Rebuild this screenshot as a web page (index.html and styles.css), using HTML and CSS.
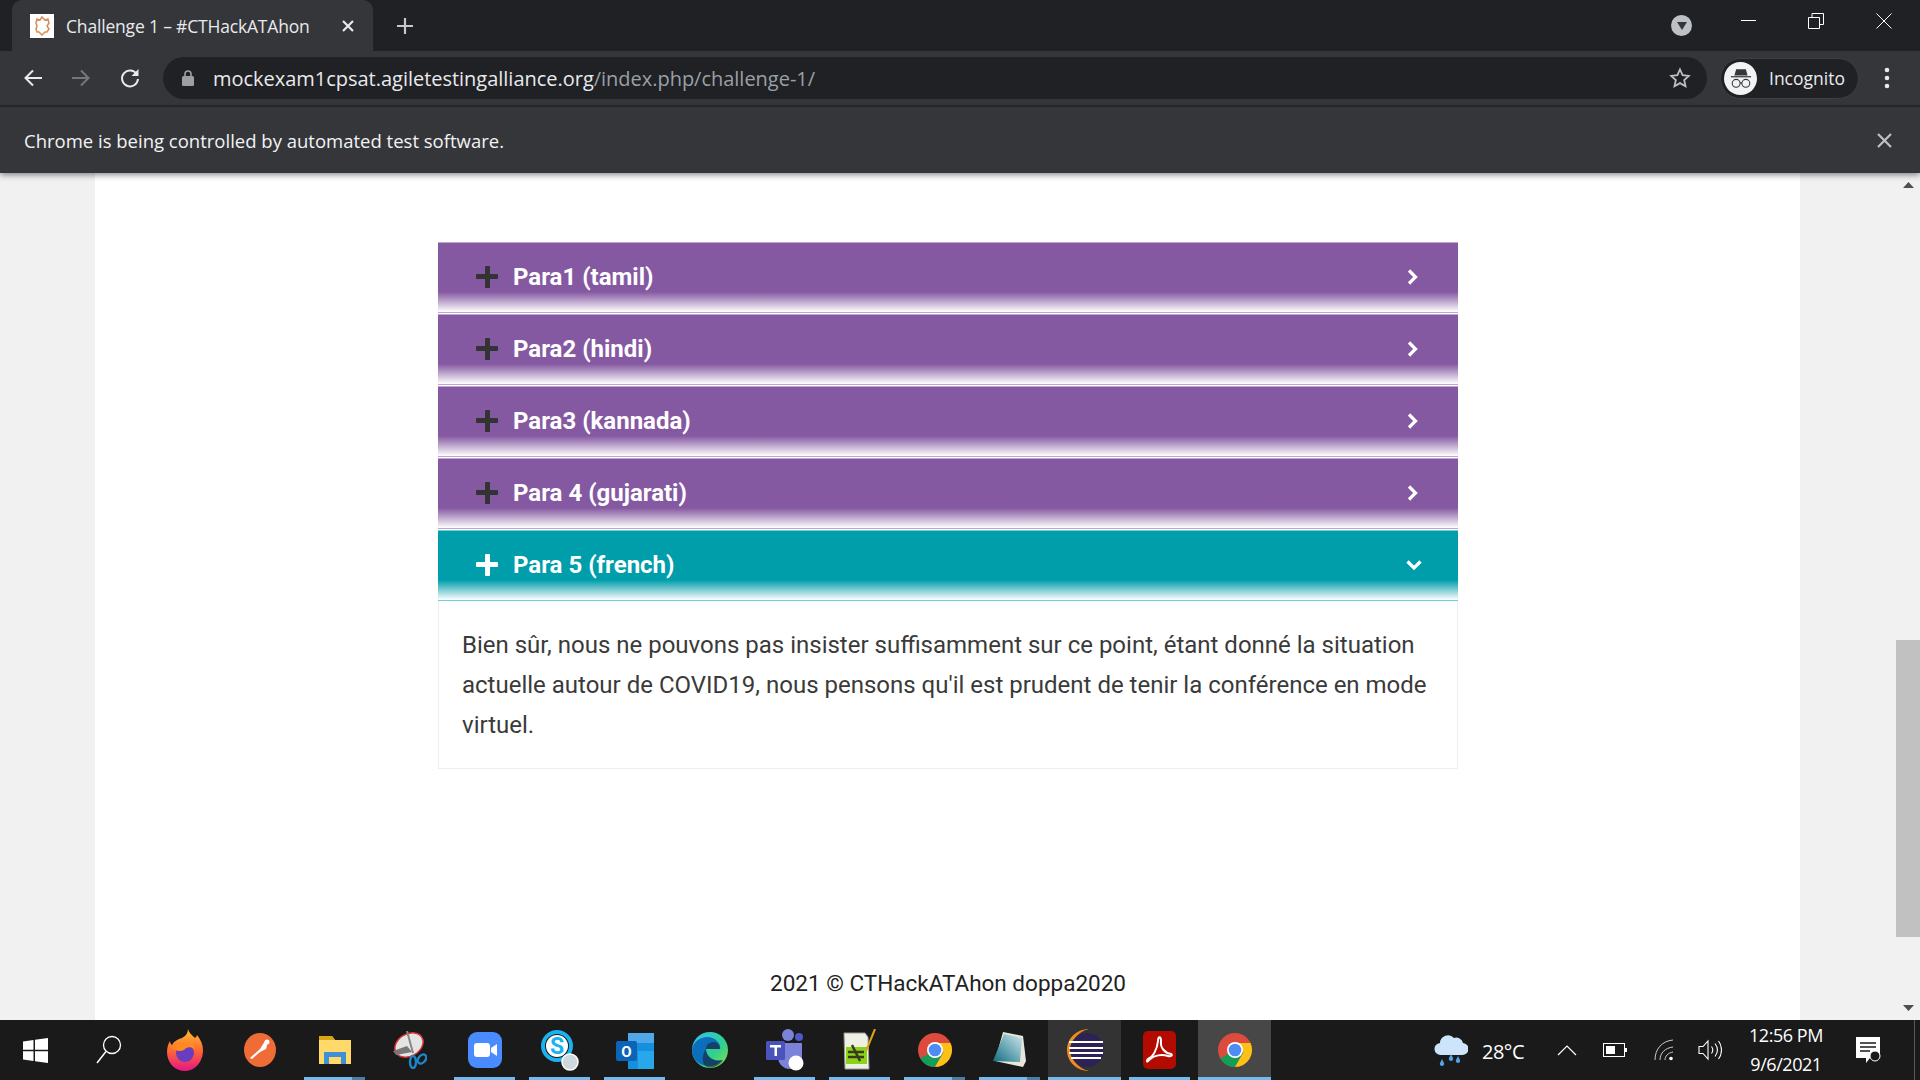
FILE: index.html
```html
<!DOCTYPE html>
<html lang="en">
<head>
<meta charset="utf-8">
<title>Challenge 1 – #CTHackATAhon</title>
<link rel="stylesheet" href="styles.css">
</head>
<body>
<div class="browser">
  <header class="tabstrip">
    <div class="tab">
      <span class="favicon"><svg width="18" height="20" viewBox="0 0 18 20"><path d="M9 1l3 3 3-1 1 4-2 3 2 3-2 3-2 0-3 3-3-3-2 0-1-3 1-3-1-3 1-4 3 1z" fill="none" stroke="#d9905f" stroke-width="1.6"/></svg></span>
      <span class="tab-title">Challenge 1 – #CTHackATAhon</span>
      <svg class="tab-close" width="14" height="14" viewBox="0 0 14 14"><path d="M2 2l10 10M12 2L2 12" stroke="#e8eaed" stroke-width="2.2"/></svg>
    </div>
    <svg class="new-tab" width="18" height="18" viewBox="0 0 18 18"><path d="M9 1v16M1 9h16" stroke="#c4c7cb" stroke-width="2.2"/></svg>
    <div class="win-group">
      <span class="tab-search"><svg width="10" height="8" viewBox="0 0 10 8"><path d="M0 0h10L5 8z" fill="#35363a"/></svg></span>
      <span class="win-btn"><svg width="15" height="15" viewBox="0 0 15 15"><path d="M0 7.5h15" stroke="#fff" stroke-width="1"/></svg></span>
      <span class="win-btn"><svg width="16" height="16" viewBox="0 0 16 16"><path d="M.5 4.5h11v11H.5zM4 4.5V.5h11.500v11h-4" fill="none" stroke="#fff" stroke-width="1"/></svg></span>
      <span class="win-btn"><svg width="16" height="16" viewBox="0 0 16 16"><path d="M.5.500l15 15M15.500.500l-15 15" stroke="#fff" stroke-width="1"/></svg></span>
    </div>
  </header>

  <nav class="toolbar">
    <svg class="nav-icon" width="20" height="20" viewBox="0 0 20 20"><path d="M19 10H3M10 2.500L2.500 10l7.500 7.500" fill="none" stroke="#e8eaed" stroke-width="2"/></svg>
    <svg class="nav-icon" width="20" height="20" viewBox="0 0 20 20"><path d="M1 10h16M10 2.500l7.500 7.500-7.500 7.500" fill="none" stroke="#75777a" stroke-width="2"/></svg>
    <svg class="nav-icon" width="22" height="22" viewBox="0 0 22 22"><path d="M18 7.500A8 8 0 1 0 19 12" fill="none" stroke="#e8eaed" stroke-width="2"/><path d="M19.500 2v7h-7z" fill="#e8eaed"/></svg>
    <div class="omnibox">
      <svg class="lock" width="12" height="16" viewBox="0 0 12 16"><path d="M3 6V4a3 3 0 0 1 6 0v2" fill="none" stroke="#9aa0a6" stroke-width="1.600"/><rect y="6" width="12" height="10" rx="1.500" fill="#9aa0a6"/></svg>
      <span class="url"><span class="url-host">mockexam1cpsat.agiletestingalliance.org</span><span class="url-path">/index.php/challenge-1/</span></span>
      <svg class="star" width="22" height="22" viewBox="0 0 22 22"><path d="M11 2.500l2.600 5.700 6.200.7-4.600 4.200 1.300 6.100L11 16.100l-5.500 3.100 1.300-6.100-4.600-4.200 6.200-.7z" fill="none" stroke="#bdc1c6" stroke-width="1.800"/></svg>
    </div>
    <div class="profile">
      <span class="profile-avatar"><svg width="22" height="21" viewBox="0 0 25 23"><path d="M7 1h11l2 7H5z" fill="#35363a"/><path d="M1 9.500h23" stroke="#35363a" stroke-width="1.400"/><circle cx="7" cy="17" r="4.500" fill="none" stroke="#35363a" stroke-width="1.200"/><circle cx="18" cy="17" r="4.500" fill="none" stroke="#35363a" stroke-width="1.200"/><path d="M11.500 16.500h2" stroke="#35363a" stroke-width="1.200"/></svg></span>
      <span class="profile-name">Incognito</span>
    </div>
    <svg class="menu-dots" width="6" height="22" viewBox="0 0 6 22"><circle cx="3" cy="3" r="2.300" fill="#e8eaed"/><circle cx="3" cy="11" r="2.300" fill="#e8eaed"/><circle cx="3" cy="19" r="2.300" fill="#e8eaed"/></svg>
  </nav>

  <div class="infobar">
    <span class="infobar-text">Chrome is being controlled by automated test software.</span>
    <svg width="15" height="15" viewBox="0 0 15 15"><path d="M1 1l13 13M14 1L1 14" stroke="#bdc1c6" stroke-width="2.200"/></svg>
  </div>

  <main class="viewport">
    <div class="page">
      <div class="content">
        <section class="accordion">
          <div class="acc-item">
            <div class="acc-head"><span class="acc-plus"></span><h3 class="acc-title">Para1 (tamil)</h3><svg class="acc-chevron" width="14" height="18" viewBox="0 0 14 18"><path d="M3 2.500l6.500 6.500L3 15.500" fill="none" stroke="#fff" stroke-width="3.200"/></svg></div>
          </div>
          <div class="acc-item">
            <div class="acc-head"><span class="acc-plus"></span><h3 class="acc-title">Para2 (hindi)</h3><svg class="acc-chevron" width="14" height="18" viewBox="0 0 14 18"><path d="M3 2.500l6.500 6.500L3 15.500" fill="none" stroke="#fff" stroke-width="3.200"/></svg></div>
          </div>
          <div class="acc-item">
            <div class="acc-head"><span class="acc-plus"></span><h3 class="acc-title">Para3 (kannada)</h3><svg class="acc-chevron" width="14" height="18" viewBox="0 0 14 18"><path d="M3 2.500l6.500 6.500L3 15.500" fill="none" stroke="#fff" stroke-width="3.200"/></svg></div>
          </div>
          <div class="acc-item">
            <div class="acc-head"><span class="acc-plus"></span><h3 class="acc-title">Para 4 (gujarati)</h3><svg class="acc-chevron" width="14" height="18" viewBox="0 0 14 18"><path d="M3 2.500l6.500 6.500L3 15.500" fill="none" stroke="#fff" stroke-width="3.200"/></svg></div>
          </div>
          <div class="acc-item is-open">
            <div class="acc-head"><span class="acc-plus"></span><h3 class="acc-title">Para 5 (french)</h3><svg class="acc-chevron" width="16" height="12" viewBox="0 0 16 12"><path d="M1.500 2.500L8 9l6.500-6.500" fill="none" stroke="#fff" stroke-width="3.200"/></svg></div>
            <div class="acc-body">Bien sûr, nous ne pouvons pas insister suffisamment sur ce point, étant donné la situation actuelle autour de COVID19, nous pensons qu'il est prudent de tenir la conférence en mode virtuel.</div>
          </div>
        </section>
        <footer class="page-footer">2021 © CTHackATAhon doppa2020</footer>
      </div>
    </div>
    <aside class="scrollbar">
      <svg width="11" height="6" viewBox="0 0 11 6"><path d="M0 6h11L5.500 0z" fill="#505050"/></svg>
      <div class="scroll-track"><div class="scroll-thumb"></div></div>
      <svg width="11" height="6" viewBox="0 0 11 6"><path d="M0 0h11L5.500 6z" fill="#505050"/></svg>
    </aside>
  </main>

  <footer class="taskbar">
    <div class="task-system task-start"><svg width="25" height="25" viewBox="0 0 25 25"><path d="M0 3.500l10.500-1.500v9.800H0zM12 1.800L25 0v11.800H12zM0 13.300h10.500V23L0 21.500zM12 13.300h13V25l-13-1.800z" fill="#fff"/></svg></div>
    <div class="task-system task-search"><svg width="26" height="30" viewBox="0 0 26 30"><circle cx="16" cy="10" r="8.500" fill="none" stroke="#fff" stroke-width="1.300"/><path d="M10 16.500L1 28" stroke="#fff" stroke-width="1.500"/></svg></div>

    <div class="task-btn"><svg width="36" height="42" viewBox="0 0 36 42"><defs><linearGradient id="ff" x1="0" y1="0" x2="0" y2="1"><stop offset="0" stop-color="#ffc22e"/><stop offset=".5" stop-color="#ff6a30"/><stop offset="1" stop-color="#e31587"/></linearGradient></defs><path d="M21 0c1 4 4 6 7 9 1-1 2-2 2-3 4 5 6 10 6 15 0 12-8 21-18 21S0 34 0 23c0-4 1-8 3-11 0 2 1 3 2 4 2-4 6-6 10-7 4-2 6-5 6-9z" fill="url(#ff)"/><circle cx="18" cy="24" r="9" fill="#6a3dc0"/><path d="M5 19c4-6 14-8 20-4 3 2 3 5 3 5-5-3-9-2-11 1-4 2-8 1-12-2z" fill="#ff8a1f"/></svg></div>
    <div class="task-btn"><svg width="32" height="34" viewBox="0 0 32 34"><ellipse cx="16" cy="17" rx="16" ry="17" fill="#ef6c37"/><path d="M6 25l10-9 5-8 3 1-2 7-6 3-8 7z" fill="#fff"/><circle cx="23" cy="9" r="2.500" fill="#fff"/></svg></div>
    <div class="task-btn has-line is-stacked"><svg width="32" height="32" viewBox="0 0 32 32"><path d="M0 2h13l3 4h16v24H0z" fill="#ffd969"/><path d="M0 2h13l3 4H0z" fill="#d9a514"/><path d="M5 30V18h22v12h-5v-7H10v7z" fill="#3f8fd6"/></svg></div>
    <div class="task-btn"><svg width="34" height="38" viewBox="0 0 34 38"><ellipse cx="16" cy="14" rx="15" ry="11" transform="rotate(-30 16 14)" fill="#e4e4e4" stroke="#d33" stroke-width="1.500"/><path d="M0 20l14-5 5 6-16 3z" fill="#777"/><path d="M14 0l6 22" stroke="#888" stroke-width="2"/><ellipse cx="20" cy="31" rx="3" ry="6" fill="none" stroke="#1d86c9" stroke-width="2.400"/><ellipse cx="29" cy="28" rx="3.500" ry="5" fill="none" stroke="#1d86c9" stroke-width="2.400" transform="rotate(40 29 28)"/></svg></div>
    <div class="task-btn has-line"><svg width="34" height="36" viewBox="0 0 34 36"><rect width="34" height="36" rx="9" fill="#4a8cff"/><rect x="6" y="11" width="16" height="14" rx="3" fill="#fff"/><path d="M23 16l6-4v12l-6-4z" fill="#fff"/></svg></div>
    <div class="task-btn has-line"><svg width="38" height="44" viewBox="0 0 38 44"><circle cx="16" cy="18" r="14" fill="none" stroke="#19b3f0" stroke-width="4"/><circle cx="16" cy="18" r="11" fill="#fff"/><text x="16" y="26" class="skype-s" text-anchor="middle">S</text><circle cx="29" cy="34" r="8" fill="#cfd8dc" stroke="#fff" stroke-width="1.500"/></svg></div>
    <div class="task-btn has-line"><svg width="38" height="38" viewBox="0 0 38 38"><path d="M12 2h26v36H12z" fill="#1490df"/><path d="M12 2h26v10H12z" fill="#50a8e8"/><path d="M22 20h16v18H22z" fill="#28a8ea"/><rect y="10" width="21" height="20" rx="2" fill="#0a64b8"/><text x="10.500" y="25.500" class="outlook-o" text-anchor="middle">O</text></svg></div>
    <div class="task-btn"><svg width="36" height="44" viewBox="0 0 36 44"><defs><linearGradient id="edge" x1="0" y1="0" x2="1" y2="1"><stop offset="0" stop-color="#35c1f1"/><stop offset=".6" stop-color="#2fd08e"/><stop offset="1" stop-color="#8ddc4f"/></linearGradient></defs><circle cx="18" cy="22" r="18" fill="url(#edge)"/><path d="M0 22C1 10 18 4 26 14c3 4 2 7 2 7H14c0 8 8 13 16 11-8 11-30 7-30-10z" fill="#0c6fbe"/><path d="M14 21c0-5 4-7 8-7s6 4 6 7zM14 21c0 8 8 14 17 11-4 6-10 9-16 7-6-3-5-13-1-18z" fill="#1b1b1b" opacity=".55"/></svg></div>
    <div class="task-btn has-line"><svg width="38" height="44" viewBox="0 0 38 44"><circle cx="22" cy="7" r="6" fill="#7b83d9"/><circle cx="33" cy="9" r="4" fill="#5059c9"/><path d="M12 15h24v14a9 9 0 0 1-24 0z" fill="#7b83d9"/><rect y="13" width="19" height="19" rx="1.500" fill="#4b53bc"/><path d="M4 17h11v2.500h-4V28H8.500v-8.500H4z" fill="#fff"/><circle cx="30" cy="35" r="7.500" fill="#fff"/></svg></div>
    <div class="task-btn has-line"><svg width="34" height="42" viewBox="0 0 34 42"><path d="M1 4h21l3 4 1 32H2z" fill="#eef0e4" stroke="#999" stroke-width="1"/><path d="M3 18h21v17H3z" fill="#8bd317"/><path d="M5 23h16M5 28h16M9 16l8 16" stroke="#3a3a1c" stroke-width="2.500"/><path d="M32 0l-9 22" stroke="#e0a113" stroke-width="2"/></svg></div>
    <div class="task-btn has-line is-stacked"><svg width="34" height="34" viewBox="0 0 34 34"><use href="#chrome-mark"/></svg></div>
    <div class="task-btn has-line is-stacked"><svg width="34" height="36" viewBox="0 0 34 36"><path d="M10 0l20 4 3 25-3 6-28-6z" fill="#e7e7d9"/><path d="M11 2l18 4-2 24L0 29z" fill="url(#np)"/><defs><linearGradient id="np" x1="0" y1="1" x2="1" y2="0"><stop offset="0" stop-color="#0f6d80"/><stop offset="1" stop-color="#cfe8ef"/></linearGradient></defs></svg></div>
    <div class="task-btn is-active"><svg width="36" height="42" viewBox="0 0 36 42"><path d="M22 0C10 0 0 9 0 21s10 21 22 21C12 40 4 31 4 21S12 2 22 0z" fill="#f28c1e"/><circle cx="20" cy="21" r="17" fill="#2c2255"/><path d="M2 13h34M2 19h34M2 24h34M4 29h30" stroke="#fff" stroke-width="2"/></svg></div>
    <div class="task-btn has-line"><svg width="33" height="38" viewBox="0 0 33 38"><rect width="33" height="38" rx="5" fill="#b30b00"/><path d="M5 28c5-2 9-9 10-18 0-5 3-5 3 0-1 7 4 12 10 13 2 1 0 3-3 2-6-2-14-1-19 4-2 3-3 1-1-1z" fill="none" stroke="#fff" stroke-width="2"/></svg></div>
    <div class="task-btn is-active is-bright"><svg width="34" height="34" viewBox="0 0 34 34"><defs><g id="chrome-mark"><circle cx="17" cy="17" r="17" fill="#dd4b3e"/><path d="M17 17L2.300 25.500A17 17 0 0 0 17 34l8.500-14.700z" fill="#129d58"/><path d="M17 10h15.500A17 17 0 0 1 17 34l8.500-14.700z" fill="#fbc116"/><circle cx="17" cy="17" r="8" fill="#fff"/><circle cx="17" cy="17" r="6.300" fill="#4d8cf5"/></g></defs><use href="#chrome-mark"/></svg></div>

    <div class="tray">
      <span class="tray-weather"><svg width="34" height="36" viewBox="0 0 34 36"><path d="M7 23a6 6 0 0 1-1-12 8 8 0 0 1 14-5 7 7 0 0 1 9 5 6 6 0 0 1-1 12z" fill="#cde4fa"/><path d="M8 27l2 4a2.200 2.200 0 1 1-4 0zM17 22l2 4a2.200 2.200 0 1 1-4 0zM24 24l2 4a2.200 2.200 0 1 1-4 0z" fill="#4fa3e8"/></svg></span>
      <span class="tray-temp">28°C</span>
      <svg class="tray-chevron" width="20" height="12" viewBox="0 0 20 12"><path d="M1 11l9-9 9 9" fill="none" stroke="#fff" stroke-width="1.200"/></svg>
      <svg class="tray-battery" width="24" height="14" viewBox="0 0 24 14"><rect x=".5" y=".5" width="21" height="13" fill="none" stroke="#fff"/><rect x="3" y="3" width="9" height="8" fill="#fff"/><rect x="22" y="5" width="2" height="4" fill="#fff"/></svg>
      <svg class="tray-wifi" width="20" height="22" viewBox="0 0 20 22"><path d="M1 21C1 10 8 2 19 1M6 21c0-7 5-12 13-13M11 21c0-4 3-7 8-8" fill="none" stroke="#ccc" stroke-width="1"/><circle cx="17" cy="19.500" r="1.800" fill="#fff"/></svg>
      <svg class="tray-volume" width="24" height="22" viewBox="0 0 24 22"><path d="M1 7.500h4L10 2v18l-5-5.500H1z" fill="none" stroke="#fff" stroke-width="1.100"/><path d="M13.500 7.500c1.500 2 1.500 5 0 7M17 4.500c3 4 3 9 0 13M20.500 2c4 5 4 13 0 18" fill="none" stroke="#fff" stroke-width="1.100"/></svg>
      <div class="tray-clock"><span>12:56 PM</span><span>9/6/2021</span></div>
      <svg class="tray-notify" width="25" height="26" viewBox="0 0 25 26"><path d="M0 0h24v21h-10l-4 5v-5H0z" fill="#fff"/><path d="M4 6h16M4 10h16M4 14h10" stroke="#1a1a1a" stroke-width="1.300"/><circle cx="19" cy="19" r="5" fill="#1a1a1a" stroke="#fff"/></svg>
    </div>
  </footer>
</div>
</body>
</html>
```

FILE: styles.css
```css
* { box-sizing: border-box; }
html, body { margin: 0; padding: 0; height: 100%; overflow: hidden; }
body { font-family: "Open Sans", "Noto Sans", sans-serif; background: #fff; }
.browser { display: flex; flex-direction: column; width: 1920px; height: 1080px; }

.tabstrip { display: flex; align-items: stretch; height: 51px; background: #202124; padding-left: 12px; flex: none; }
.tab { display: flex; align-items: center; width: 361px; background: #35363a; border-radius: 10px 10px 0 0; padding-left: 18px; }
.favicon { display: flex; align-items: center; justify-content: center; width: 24px; height: 24px; background: #fff; flex: none; }
.tab-title { margin-left: 12px; width: 263px; font-size: 17.500px; letter-spacing: -.18px; color: #e8eaed; white-space: nowrap; }
.tab-close { margin-left: 12px; }
.new-tab { align-self: center; margin-left: 23px; }
.win-group { display: flex; align-items: center; margin-left: auto; padding-right: 2px; }
.tab-search { display: flex; align-items: center; justify-content: center; width: 21px; height: 21px; border-radius: 50%; background: #bdc1c6; margin-right: 22px; }
.win-btn { display: flex; justify-content: center; width: 68px; margin-top: -10px; }

.toolbar { display: flex; align-items: center; height: 56px; padding: 0 0 0 23px; background: #35363a; border-bottom: 2px solid #29292c; flex: none; }
.nav-icon { margin-right: 28px; flex: none; }
.omnibox { display: flex; align-items: center; width: 1544px; height: 42px; margin-left: -6px; padding: 0 16px 0 19px; border-radius: 21px; background: #202124; }
.lock { flex: none; }
.url { margin-left: 19px; font-size: 20px; letter-spacing: -.02px; white-space: nowrap; }
.url-host { color: #e8eaed; }
.url-path { color: #9aa0a6; }
.star { margin-left: auto; }
.profile { display: flex; align-items: center; width: 139px; height: 41px; margin-left: 13px; padding-left: 3px; border-radius: 21px; background: #202124; border: 1px solid #3f4044; }
.profile-avatar { display: flex; align-items: center; justify-content: center; width: 33px; height: 33px; border-radius: 50%; background: #f1f3f4; flex: none; }
.profile-name { margin-left: 12px; font-size: 17.500px; color: #e8eaed; }
.menu-dots { margin-left: 25px; }

.infobar { position: relative; z-index: 2; display: flex; align-items: center; justify-content: space-between; height: 66px; padding: 0 28px 0 24px; background: #35363a; box-shadow: 0 2px 6px rgba(0, 0, 0, .45); flex: none; }
.infobar-text { font-size: 18.500px; color: #f1f3f4; }

.viewport { display: flex; flex: 1; min-height: 0; overflow: hidden; }
.page { flex: 1; background: #f1f1f1; padding: 0 96px 0 95px; }
.content { height: 100%; background: #fff; padding: 69px 342px 0 343px; }
.accordion { display: flex; flex-direction: column; gap: 1px; }
.acc-item { --tone: #8559a2; --edge: #bda5cf; }
.acc-item.is-open { --tone: #009dab; --edge: #6fd0d8; }
.acc-head { display: flex; align-items: center; height: 71px; padding: 0 38px 2px 38px; color: #fff; border-top: 1px solid var(--edge); border-bottom: 1px solid var(--edge); background: linear-gradient(var(--tone) 0, var(--tone) 49px, #fff 69px); }
.is-open .acc-head { padding-right: 36px; }
.acc-plus { position: relative; width: 22px; height: 22px; flex: none; color: #333; }
.is-open .acc-plus { color: #fff; }
.acc-plus::before, .acc-plus::after { content: ""; position: absolute; background: currentColor; border-radius: 1px; }
.acc-plus::before { left: 0; right: 0; top: 8.500px; height: 5px; }
.acc-plus::after { top: 0; bottom: 0; left: 8.500px; width: 5px; }
.acc-title { margin: 0 0 0 15px; flex: 1; font-family: Roboto, sans-serif; font-size: 24px; font-weight: 700; line-height: 30px; }
.acc-body { padding: 24px 23px 23px; border: 1px solid #eee; border-top: 0; font-family: Roboto, sans-serif; font-size: 24px; line-height: 40px; color: #3a3a3a; }
.page-footer { margin-top: 202px; text-align: center; font-family: Roboto, sans-serif; font-size: 22.500px; line-height: 24px; color: #222; }

.scrollbar { display: flex; flex-direction: column; align-items: center; width: 24px; background: #f1f1f1; flex: none; padding: 9px 0 9px; }
.scroll-track { flex: 1; width: 100%; padding-top: 452px; padding-bottom: 68px; }
.scroll-thumb { width: 100%; height: 100%; background: #c1c1c1; }

.taskbar { display: flex; align-items: stretch; height: 60px; background: #1a1a1a; flex: none; padding-right: 5px; }
.task-system { display: flex; align-items: center; justify-content: center; flex: none; }
.task-start { width: 71px; }
.task-search { width: 76px; }
.task-btn { position: relative; display: flex; align-items: center; justify-content: center; width: 75px; flex: none; }
.task-btn.has-line::after, .task-btn.is-active::after { content: ""; position: absolute; left: 7px; right: 7px; bottom: 0; height: 3px; background: #76b9ed; }
.task-btn.is-stacked::after { background: linear-gradient(90deg, #76b9ed 78%, #4f7ea3 78%); }
.task-btn.is-active { background: #333; margin: 0 1px; width: 73px; }
.task-btn.is-active::after { left: 0; right: 0; }
.task-btn.is-bright { background: #474747; }
.skype-s { font: 700 23px Roboto, sans-serif; fill: #19b3f0; }
.outlook-o { font: 700 15px Roboto, sans-serif; fill: #fff; }

.tray { display: flex; align-items: center; margin-left: auto; color: #fff; padding-right: 33px; border-right: 1px solid #5a5a5a; }
.tray-weather { display: flex; margin-right: 14px; }
.tray-temp { width: 58px; margin-top: 2px; font-size: 20px; letter-spacing: -.5px; white-space: nowrap; }
.tray-chevron { margin-left: 17px; }
.tray-battery { margin-left: 26px; }
.tray-wifi { margin-left: 27px; }
.tray-volume { margin-left: 24px; }
.tray-clock { display: flex; flex-direction: column; align-items: center; gap: 4px; width: 74px; margin-left: 27px; font-size: 18px; line-height: 25px; letter-spacing: -.45px; white-space: nowrap; }
.tray-notify { margin-left: 33px; }
```
